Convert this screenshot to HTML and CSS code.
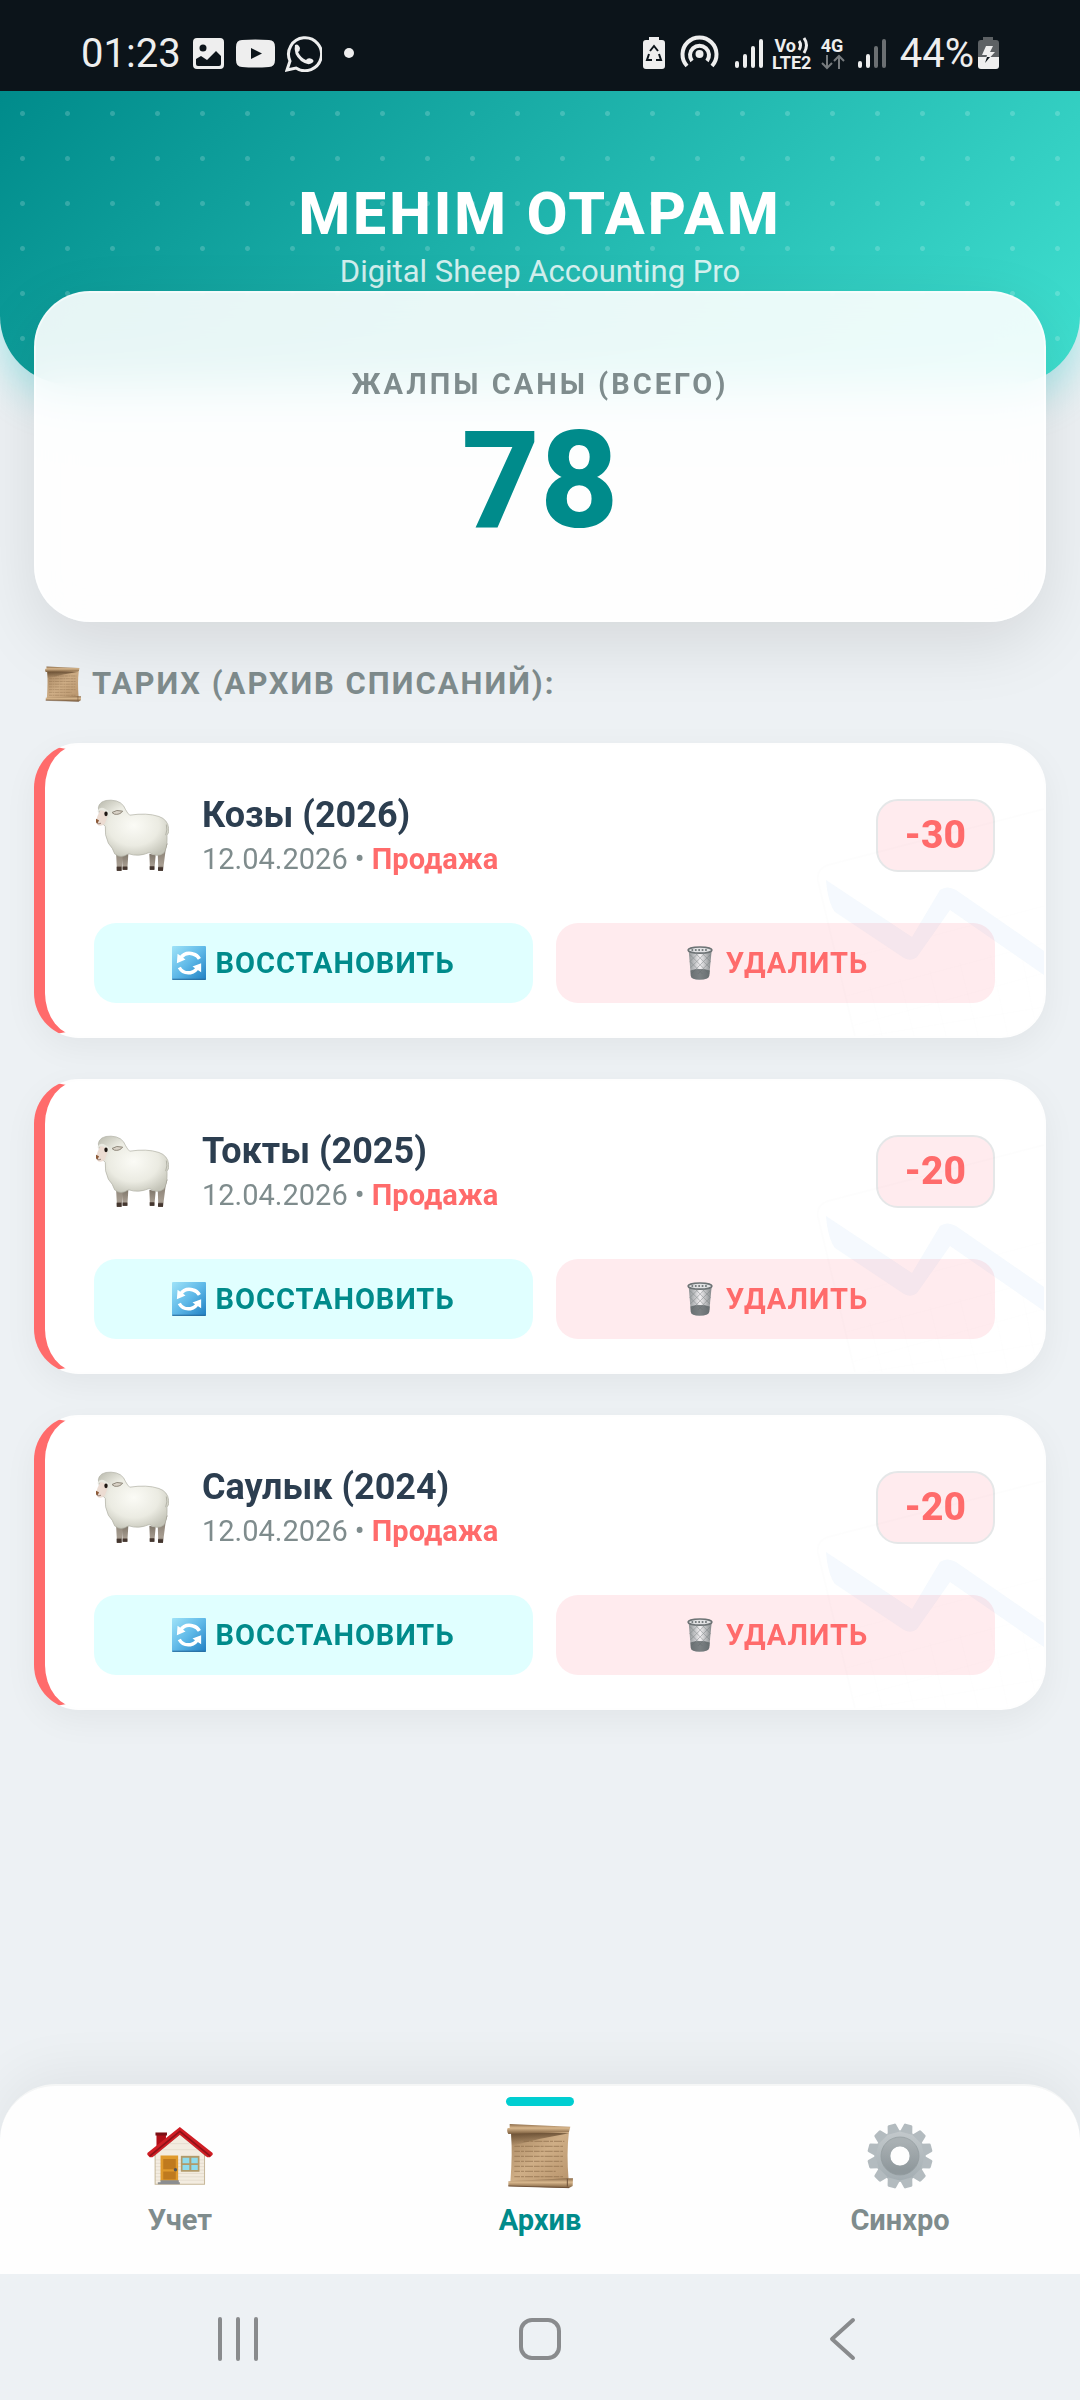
FILE: index.html
```html
<!DOCTYPE html>
<html lang="ru">
<head>
<meta charset="utf-8">
<meta name="viewport" content="width=device-width, initial-scale=1">
<title>МЕНІМ ОТАРАМ</title>
<link rel="stylesheet" href="styles.css">
</head>
<body>
<svg class="sprite" aria-hidden="true">
  <defs>
    <linearGradient id="paper" x1="0" y1="0" x2="1" y2="1"><stop offset="0" stop-color="#a5845f"/><stop offset=".5" stop-color="#cfae86"/><stop offset="1" stop-color="#b8946c"/></linearGradient>
    <linearGradient id="roll" x1="0" y1="0" x2="0" y2="1"><stop offset="0" stop-color="#8a6a48"/><stop offset=".4" stop-color="#d9b88e"/><stop offset="1" stop-color="#7a5c3c"/></linearGradient>
    <linearGradient id="fold" x1="0" y1="0" x2="0" y2="1"><stop offset="0" stop-color="#5a4128" stop-opacity=".85"/><stop offset="1" stop-color="#5a4128" stop-opacity="0"/></linearGradient>
    <radialGradient id="wool" cx=".5" cy=".45" r=".6"><stop offset="0" stop-color="#fbfbf6"/><stop offset=".6" stop-color="#ebebe2"/><stop offset="1" stop-color="#c4c4b8"/></radialGradient>
    <linearGradient id="leg" x1="0" y1="0" x2="0" y2="1"><stop offset="0" stop-color="#7d7468"/><stop offset=".8" stop-color="#a89e92"/><stop offset="1" stop-color="#4a3d35"/></linearGradient>
    <linearGradient id="sky" x1="0" y1="0" x2="1" y2="1"><stop offset="0" stop-color="#9fe3f8"/><stop offset=".5" stop-color="#5fb9e8"/><stop offset="1" stop-color="#1f7fc2"/></linearGradient>
    <linearGradient id="steel" x1="0" y1="0" x2="0" y2="1"><stop offset="0" stop-color="#c3c9cc"/><stop offset="1" stop-color="#a3adb2"/></linearGradient>
    <linearGradient id="ring" x1="0" y1="0" x2="0" y2="1"><stop offset="0" stop-color="#a9b0b3"/><stop offset="1" stop-color="#8f989c"/></linearGradient>
    <linearGradient id="bin" x1="0" y1="0" x2="1" y2="0"><stop offset="0" stop-color="#8f9496"/><stop offset=".5" stop-color="#f2f0f2"/><stop offset="1" stop-color="#83888a"/></linearGradient>
    <path id="tooth" d="M101 50 L107 26 Q108 23 111 23 H129 Q132 23 133 26 L139 50Z" transform="rotate(15 120 121)"/>
  </defs>
  <symbol id="scroll" viewBox="1100 41 198 194">
    <path d="M1112 60 L1286 64 Q1278 130 1285 212 L1110 218 Q1117 130 1112 60Z" fill="url(#paper)"/>
    <path d="M1112 66 L1286 70 L1200 86 L1113 108Z" fill="url(#fold)"/>
    <g stroke="#8d6d4a" stroke-width="4" stroke-dasharray="17 3 9 3 24 3" opacity=".55">
      <path d="M1150 94H1272M1122 109H1268M1122 124H1268M1122 139H1268M1122 154H1266M1122 169H1268M1122 184H1246M1122 200H1268"/>
    </g>
    <path d="M1108 42 L1290 50 L1286 66 L1104 72 Q1098 64 1102 54 H1108Z" fill="url(#roll)"/>
    <path d="M1104 214 L1280 205 L1298 205 L1297 228 L1286 234 L1104 228Z" fill="url(#roll)"/>
    <path d="M1281 206 V230 M1104 228 L1286 233" fill="none" stroke="#70533a" stroke-width="3"/>
  </symbol>
  <symbol id="sheep" viewBox="41 58 225 218">
    <path d="M124 220 L127 270 H141 L144 222Z M207 222 L209 270 H222 L226 226Z" fill="url(#leg)"/>
    <path d="M107 215 L110 273 H124 L128 215Z M232 215 L234 273 H248 L256 210 L262 190Z" fill="url(#leg)"/>
    <path d="M109 261H123V273H109ZM127 260H141V270H127ZM208 259H222V270H208ZM233 262H248V273H233Z" fill="#44362f"/>
    <path d="M54 84 Q57 60 92 61 Q126 62 136 90 Q142 101 148 106 Q200 98 236 110 Q262 119 265 145 Q268 158 260 166 Q262 205 250 220 Q230 234 207 218 Q175 232 145 222 Q120 238 103 222 Q98 205 84 190 Q72 165 75 140 Q60 130 54 84Z" fill="url(#wool)" stroke="#aeaea2" stroke-width="2"/>
    <path d="M258 134 Q262 150 256 166" fill="none" stroke="#b4b4a8" stroke-width="3"/>
    <path d="M60 91 Q50 108 47 124 Q48 137 60 138 Q74 137 77 122 Q85 103 77 95 Q68 88 60 91Z" fill="#ecdcd2"/>
    <path d="M47 117 L56 121 L52 130 L47 128Z" fill="#8d5a38"/>
    <path d="M49 129 Q56 135 62 130" fill="none" stroke="#6e5548" stroke-width="2"/>
    <path d="M52 92 Q60 78 76 88 Q92 94 88 112 Q84 96 72 94 Q60 88 52 96Z" fill="#e9e9e1"/>
    <ellipse cx="77" cy="102" rx="5" ry="7" fill="#1d1612"/>
    <path d="M95 98 Q108 88 127 94 Q118 106 102 103Z" fill="#d9d2c7" stroke="#8f887b" stroke-width="3"/>
  </symbol>
  <symbol id="restore" viewBox="39 60 98 98">
    <rect x="39" y="60" width="98" height="98" rx="3" fill="url(#sky)"/>
    <path d="M40 156H136" stroke="#286a9a" stroke-width="3"/>
    <g fill="none" stroke="#fff" stroke-width="10"><path d="M63 96 Q76 76 100 83 Q112 86 118 97"/><path d="M60 122 Q70 140 92 137 Q108 134 114 119"/></g>
    <path d="M55 82 L53 110 L78 99Z M123 110 L98 119 L123 136Z" fill="#fff"/>
  </symbol>
  <symbol id="trash" viewBox="424 674 78 100">
    <path d="M430 690 L436 762 Q438 773 462 773 Q487 773 490 762 L497 690Z" fill="url(#bin)"/>
    <path d="M434 700L490 756M450 696L492 738M470 696L494 720M434 720L470 756M493 700L437 756M477 696L435 738M457 696L433 720M493 720L457 756" stroke="#7a8082" stroke-width="2" opacity=".7"/>
    <path d="M435 746 Q462 738 492 746 L490 762 Q487 773 462 773 Q438 773 436 762Z" fill="#5d6467" opacity=".8"/>
    <ellipse cx="463" cy="686" rx="35" ry="9" fill="#e2e2e4" stroke="#6d7375" stroke-width="5"/>
    <path d="M438 686H488" stroke="#7a8082" stroke-width="6" stroke-dasharray="5 5"/>
  </symbol>
  <symbol id="house" viewBox="22 47 195 183">
    <path d="M50 72H78V110H50Z" fill="#b00f18"/><path d="M47 69H81V78H47Z" fill="#7d1015"/>
    <path d="M46 132 L119 68 L192 132 V222 H46Z" fill="#f3ece0"/>
    <path d="M46 150H192M46 160H192M46 170H192M46 180H192M46 190H192M46 200H192M46 210H192M70 120H170M90 102H148" stroke="#e0d6c6" stroke-width="2"/>
    <path d="M46 132V222H192V132" fill="none" stroke="#c7b899" stroke-width="3"/>
    <path d="M40 138 L119 72 L198 138" fill="none" stroke="#6b3a30" stroke-width="6" opacity=".5"/>
    <path d="M23 130 L119 53 L216 130 V135 L208 142 H200 L119 76 L38 142 H30 L23 135Z" fill="#cf1d24"/>
    <path d="M30 139 L119 66 L209 139" fill="none" stroke="#8f1218" stroke-width="5"/>
    <path d="M62 137H114V212H62Z" fill="#e09a2c"/><path d="M70 147H107V178H70ZM70 184H107V208H70Z" fill="#bf7a1e"/>
    <circle cx="106" cy="179" r="5" fill="#555"/>
    <path d="M62 210H116V216H119V222H54V216H62Z" fill="#8b8d8f"/>
    <path d="M122 138H177V185H122Z" fill="#b29a68"/><path d="M127 144H147V160H127ZM153 144H172V160H153ZM127 165H147V180H127ZM153 165H172V180H153Z" fill="#8fdcec"/>
  </symbol>
  <symbol id="gear" viewBox="21 22 198 198">
    <path fill-rule="evenodd" d="M120 44 a77 77 0 1 0 .1 0Z M120 92 a29 29 0 1 1 -.1 0Z" fill="url(#steel)"/>
    <g fill="#b3bbbf">
      <use href="#tooth"/><use href="#tooth" transform="rotate(30 120 121)"/><use href="#tooth" transform="rotate(60 120 121)"/><use href="#tooth" transform="rotate(90 120 121)"/><use href="#tooth" transform="rotate(120 120 121)"/><use href="#tooth" transform="rotate(150 120 121)"/><use href="#tooth" transform="rotate(180 120 121)"/><use href="#tooth" transform="rotate(210 120 121)"/><use href="#tooth" transform="rotate(240 120 121)"/><use href="#tooth" transform="rotate(270 120 121)"/><use href="#tooth" transform="rotate(300 120 121)"/><use href="#tooth" transform="rotate(330 120 121)"/>
    </g>
    <circle cx="120" cy="121" r="43" fill="none" stroke="url(#ring)" stroke-width="27"/>
    <circle cx="120" cy="121" r="57" fill="none" stroke="#8d9599" stroke-width="2"/>
  </symbol>
  <symbol id="chart" viewBox="814 805 230 230">
    <path d="M855 1035 L818 880 Q816 868 828 864 L1044 808" fill="none" stroke="#888" stroke-width="2" opacity=".25"/>
    <path d="M838 960 L1044 905 M846 995 L1044 942 M852 1025 L1044 972 M868 1035 L1044 1006 M870 986 L882 1035 M900 978 L914 1035 M930 970 L946 1035 M960 962 L978 1035 M990 954 L1008 1035 M1020 946 L1038 1035" fill="none" stroke="#888" stroke-width="1" opacity=".2"/>
    <path d="M826 879 Q828 902 835 911 L904 957 Q911 961 917 956 L950 909 L1044 974 V950 L956 889 Q947 884 940 889 L912 936 Z" fill="#3a92dc"/>
  </symbol>
</svg>

<div class="status">
  <div class="status-side">
    <span class="clock">01:23</span>
    <svg width="35" height="37" viewBox="192 36 35 37"><path fill-rule="evenodd" d="M198 39H221Q225 39 225 43V66Q225 70 221 70H198Q194 70 194 66V43Q194 39 198 39ZM197 60V65Q197 67 199 67H220Q222 67 222 65V57L217 52L208 61L202 57ZM204 45.500A3.500 3.500 0 1 0 204 52.500A3.500 3.500 0 1 0 204 45.500Z" fill="#eee"/></svg>
    <svg width="39" height="37" viewBox="237 36 39 37"><path fill-rule="evenodd" d="M243 41Q256 40 270 41Q276 41 276 48V61Q276 68 270 68Q256 69 243 68Q237 68 237 61V48Q237 41 243 41ZM252 49V60L263 54.500Z" fill="#eee"/></svg>
    <svg width="37" height="37" viewBox="285 36 37 37"><path d="M287 71L290 62A16.500 16.500 0 1 1 296 69Z" fill="none" stroke="#eee" stroke-width="3"/><path d="M295 46Q298 44 300 49Q300 52 298 53Q301 59 306 61Q308 58 312 60Q315 62 312 64Q308 67 301 62Q293 55 295 46Z" fill="#eee"/></svg>
    <svg width="34" height="37" viewBox="333 36 34 37"><circle cx="350" cy="54" r="5" fill="#eee"/></svg>
  </div>
  <div class="status-side right">
    <svg width="27" height="37" viewBox="640 36 27 37"><path d="M648 38H658V41H661Q664 41 664 44V67Q664 70 661 70H645Q642 70 642 67V44Q642 41 645 41H648Z" fill="#eee"/><path d="M649 52L653 47L657 52M658 55L660 61H655M651 61H646L648 55" fill="none" stroke="#0c141a" stroke-width="2"/></svg>
    <svg width="49" height="37" viewBox="676 36 49 37"><g fill="none" stroke="#eee" stroke-width="4"><path d="M686 67A17 17 0 1 1 711 67"/><path d="M691 62A9.500 9.500 0 1 1 706 62"/></g><circle cx="698.500" cy="55" r="4" fill="#eee"/></svg>
    <svg width="28" height="37" viewBox="734 36 28 37"><path d="M736 64V67M744 57V67M752 49V67M760 42V67" stroke="#eee" stroke-width="4" stroke-linecap="round"/></svg>
    <span class="net wide"><span>Vo<svg width="12" height="17" viewBox="0 0 12 17"><path d="M2 4Q5 8 2 13M7 1Q12 8 7 16" fill="none" stroke="#eee" stroke-width="3"/></svg></span><span>LTE2</span></span>
    <span class="net"><span>4G</span><svg width="24" height="17" viewBox="0 0 24 17"><path d="M6 1V14M1 9L6 14L11 9M18 15V2M13 7L18 2L23 7" fill="none" stroke="#777b7e" stroke-width="2"/></svg></span>
    <svg width="37" height="37" viewBox="853 36 37 37"><path d="M859 64V67M867 57V67" stroke="#eee" stroke-width="4" stroke-linecap="round"/><path d="M875 49V67M883 42V67" stroke="#6b6f72" stroke-width="4" stroke-linecap="round"/></svg>
    <span class="battery"><span class="clock">44%</span><svg width="21" height="37" viewBox="978 36 21 37"><path d="M983 38H993V41H996Q999 41 999 44V59H978V44Q978 41 981 41H983Z" fill="#5d6164"/><path d="M978 58H999V67Q999 70 996 70H981Q978 70 978 67Z" fill="#eee"/><path d="M986 47H993L990 53H995L985 64L987 56H982Z" fill="#eee"/><path d="M987 58H990L985 64Z" fill="#0c141a"/></svg></span>
  </div>
</div>

<header class="hero">
  <h1>МЕНІМ ОТАРАМ</h1>
  <p>Digital Sheep Accounting Pro</p>
</header>

<main>
  <section class="total">
    <h2>ЖАЛПЫ САНЫ (ВСЕГО)</h2>
    <strong>78</strong>
  </section>

  <h2 class="section-title"><svg class="icon-title"><use href="#scroll"/></svg>ТАРИХ (АРХИВ СПИСАНИЙ):</h2>

  <div class="list">
    <article class="entry">
      <div class="entry-head">
        <svg class="sheep"><use href="#sheep"/></svg>
        <div class="entry-text"><h3>Козы (2026)</h3><p>12.04.2026 • <b>Продажа</b></p></div>
        <span class="badge">-30</span>
      </div>
      <div class="actions">
        <button class="restore" type="button"><svg class="icon-action"><use href="#restore"/></svg>ВОССТАНОВИТЬ</button>
        <button class="delete" type="button"><svg class="icon-action"><use href="#trash"/></svg>УДАЛИТЬ</button>
      </div>
      <svg class="watermark"><use href="#chart"/></svg>
    </article>
    <article class="entry">
      <div class="entry-head">
        <svg class="sheep"><use href="#sheep"/></svg>
        <div class="entry-text"><h3>Токты (2025)</h3><p>12.04.2026 • <b>Продажа</b></p></div>
        <span class="badge">-20</span>
      </div>
      <div class="actions">
        <button class="restore" type="button"><svg class="icon-action"><use href="#restore"/></svg>ВОССТАНОВИТЬ</button>
        <button class="delete" type="button"><svg class="icon-action"><use href="#trash"/></svg>УДАЛИТЬ</button>
      </div>
      <svg class="watermark"><use href="#chart"/></svg>
    </article>
    <article class="entry">
      <div class="entry-head">
        <svg class="sheep"><use href="#sheep"/></svg>
        <div class="entry-text"><h3>Саулык (2024)</h3><p>12.04.2026 • <b>Продажа</b></p></div>
        <span class="badge">-20</span>
      </div>
      <div class="actions">
        <button class="restore" type="button"><svg class="icon-action"><use href="#restore"/></svg>ВОССТАНОВИТЬ</button>
        <button class="delete" type="button"><svg class="icon-action"><use href="#trash"/></svg>УДАЛИТЬ</button>
      </div>
      <svg class="watermark"><use href="#chart"/></svg>
    </article>
  </div>
</main>

<nav class="tabs">
  <button class="tab" type="button"><svg class="icon-tab"><use href="#house"/></svg>Учет</button>
  <button class="tab active" type="button"><svg class="icon-tab"><use href="#scroll"/></svg>Архив</button>
  <button class="tab" type="button"><svg class="icon-tab"><use href="#gear"/></svg>Синхро</button>
</nav>

<div class="system">
  <button type="button" aria-label="Недавние"><svg width="44" height="44" viewBox="0 0 44 44"><path d="M4 2V42M22 2V42M40 2V42" stroke="#898b8d" stroke-width="4" stroke-linecap="round"/></svg></button>
  <button type="button" aria-label="Домой"><svg width="44" height="44" viewBox="0 0 44 44"><rect x="3" y="3" width="38" height="38" rx="11" fill="none" stroke="#898b8d" stroke-width="4"/></svg></button>
  <button type="button" aria-label="Назад"><svg width="44" height="44" viewBox="0 0 44 44"><path d="M33 3L12 22L33 41" fill="none" stroke="#898b8d" stroke-width="4" stroke-linecap="round" stroke-linejoin="round"/></svg></button>
</div>
</body>
</html>
```
FILE: styles.css
```css
* { box-sizing: border-box; }

body {
  margin: 0;
  min-height: 100vh;
  display: flex;
  flex-direction: column;
  background: #edf1f4;
  color: #2c3e50;
  font-family: Roboto, "Noto Sans", sans-serif;
}

h1, h2, h3, p { margin: 0; }

button {
  font: inherit;
  border: 0;
  padding: 0;
  background: none;
  cursor: pointer;
}

.sprite { position: absolute; width: 0; height: 0; }

/* Status bar */
.status {
  position: relative;
  z-index: 1;
  height: 91px;
  padding: 16px 81px 0 81px;
  display: flex;
  align-items: center;
  justify-content: space-between;
  background: #0c141a;
  color: #eee;
}

.status-side { display: flex; align-items: center; gap: 10px; }
.status-side.right { gap: 9px; }
.clock { font-size: 40px; line-height: 40px; }
.battery { display: flex; align-items: center; gap: 4px; }

.net {
  display: flex;
  flex-direction: column;
  font-size: 18px;
  line-height: 17px;
  font-weight: 700;
}

.net.wide { width: 40px; }
.net.wide span { display: flex; justify-content: center; gap: 1px; }

/* Header */
.hero {
  padding: 89px 20px 94px;
  text-align: center;
  color: #fff;
  background:
    radial-gradient(circle, rgba(255, 255, 255, 0.18) 2px, transparent 3px) 0 0 / 45px 45px,
    linear-gradient(135deg, #008b8b, #40e0d0);
  border-radius: 0 0 68px 68px;
  box-shadow: 0 16px 40px rgba(0, 206, 209, 0.3);
}

.hero h1 { font-size: 59px; line-height: 68px; font-weight: 800; letter-spacing: 3px; }
.hero p { margin-top: 5px; font-size: 31px; line-height: 37px; opacity: 0.8; }

main { flex: 1; padding: 0 34px 40px; }

.total {
  position: relative;
  margin-top: -93px;
  padding: 74px 20px 59px;
  text-align: center;
  border: 2px solid rgba(255, 255, 255, 0.5);
  border-radius: 56px;
  background: rgba(255, 255, 255, 0.9);
  backdrop-filter: blur(22px);
  box-shadow: 0 22px 67px rgba(0, 0, 0, 0.1);
}

.total h2 { font-size: 29px; line-height: 34px; letter-spacing: 3px; color: #7f8c8d; }
.total strong { display: block; font-size: 136px; line-height: 160px; font-weight: 800; color: #008b8b; }

.section-title {
  display: flex;
  align-items: center;
  gap: 11px;
  margin: 43px 0 41px;
  padding-left: 11px;
  font-size: 31px;
  line-height: 37px;
  letter-spacing: 2px;
  color: #7f8c8d;
}

.icon-title { width: 36px; height: 36px; }

/* Archive entries */
.list { display: flex; flex-direction: column; gap: 41px; }

.entry {
  position: relative;
  overflow: hidden;
  padding: 49px 49px 33px;
  border: 2px solid #fefefe;
  border-left: 11px solid #ff6b6b;
  border-radius: 45px;
  background: #fff;
  box-shadow: 0 10px 34px rgba(0, 0, 0, 0.05);
}

.entry-head { display: flex; align-items: center; gap: 33px; }
.sheep { width: 75px; height: 73px; }
.entry-text { flex: 1; }
.entry h3 { font-size: 36px; line-height: 42px; }
.entry p { margin-top: 6px; font-size: 29px; line-height: 34px; color: #7f8c8d; }
.entry p b { color: #ff6b6b; }

.badge {
  padding: 13px 27px;
  border: 2px solid #e5e7e8;
  border-radius: 22px;
  background: #ffebee;
  color: #ff6b6b;
  font-size: 39px;
  line-height: 43px;
  font-weight: 800;
}

.actions { display: grid; grid-template-columns: 1fr 1fr; gap: 23px; margin-top: 47px; }

.actions button {
  display: flex;
  align-items: center;
  justify-content: center;
  gap: 9px;
  height: 80px;
  border-radius: 22px;
  font-size: 29px;
  font-weight: 700;
  letter-spacing: 1px;
}

.actions .restore { background: #e0ffff; color: #008b8b; }
.actions .delete { background: #ffebee; color: #ff6b6b; }
.icon-action { width: 34px; height: 34px; }

.watermark {
  position: absolute;
  right: 0;
  bottom: 0;
  width: 230px;
  height: 230px;
  opacity: 0.05;
  pointer-events: none;
}

/* Bottom tabs */
.tabs {
  display: grid;
  grid-template-columns: repeat(3, 1fr);
  border-top: 2px solid #f5f6f6;
  border-radius: 56px 56px 0 0;
  background: #fefefe;
  box-shadow: 0 -11px 56px rgba(0, 0, 0, 0.06);
}

.tab {
  position: relative;
  display: flex;
  flex-direction: column;
  align-items: center;
  gap: 14px;
  padding: 37px 0;
  color: #7f8c8d;
  font-size: 29px;
  line-height: 34px;
  font-weight: 700;
}

.icon-tab { width: 66px; height: 66px; }
.tab.active { color: #008b8b; }

.tab.active::before {
  content: "";
  position: absolute;
  top: 11px;
  width: 68px;
  height: 9px;
  border-radius: 5px;
  background: #00ced1;
}

/* System navigation */
.system {
  position: relative;
  display: grid;
  grid-template-columns: repeat(3, 1fr);
  height: 126px;
  padding: 4px 8% 0;
  background: #edf1f4;
}

.system button { display: flex; align-items: center; justify-content: center; }
```
